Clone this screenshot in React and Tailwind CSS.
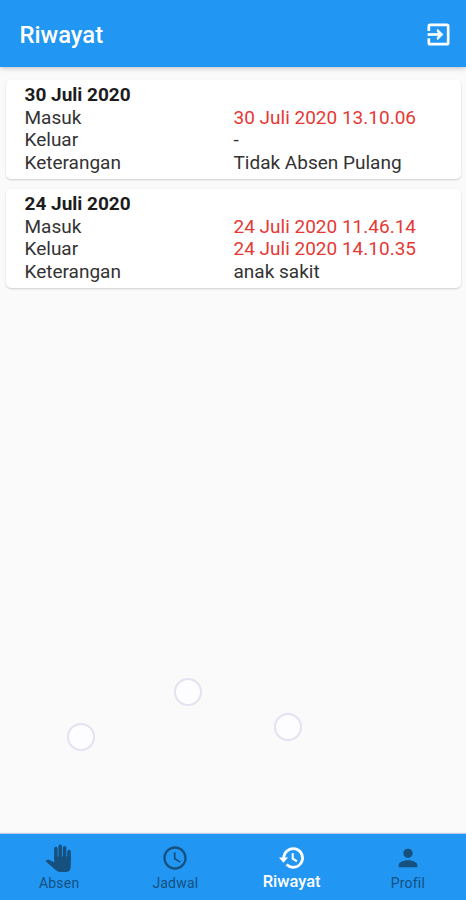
import React from "react";
import { MdAccessTime, MdPerson } from "react-icons/md";

const HandIcon = ({ size }) => (
  <svg width={size} height={size} viewBox="0 0 28 28" fill="none" stroke="currentColor" strokeLinecap="round">
    <path d="M10.9 4.6V14M15.2 2.2V14M19.6 3.7V14M24 7.4V16" strokeWidth="3.5" />
    <path
      d="M9.2 12.5H25.75V22.5Q25.75 28 20.5 28H15.5Q12.3 28 10.4 25.7L0.6 17.2Q2.2 15 5.4 16.4L9.2 18.2Z"
      fill="currentColor"
      stroke="none"
    />
  </svg>
);

const ExitIcon = ({ size }) => (
  <svg width={size} height={size} viewBox="0 0 24 24" fill="none" stroke="currentColor">
    <path d="M4 9V5Q4 4 5 4H19Q20 4 20 5V19Q20 20 19 20H5Q4 20 4 19V15" strokeWidth="2.2" />
    <path d="M3 12H13" strokeWidth="2.2" />
    <path d="M11.2 7.6L15.6 12L11.2 16.4L11 14.5L13 12L11 9.5Z" fill="currentColor" strokeWidth="0.8" />
  </svg>
);

const HistoryIcon = ({ size }) => (
  <svg width={size} height={size} viewBox="0 0 24 24" fill="none" stroke="currentColor">
    <path d="M5 12A8 8 0 1 1 7.35 17.65" strokeWidth="2.4" />
    <path d="M0.8 11.6H8.6L4.7 16Z" fill="currentColor" stroke="none" />
    <path d="M12.6 8V12.6L16.2 14.8" strokeWidth="1.8" />
  </svg>
);

const riwayat = [
  {
    tanggal: "30 Juli 2020",
    masuk: "30 Juli 2020 13.10.06",
    keluar: "-",
    keterangan: "Tidak Absen Pulang",
  },
  {
    tanggal: "24 Juli 2020",
    masuk: "24 Juli 2020 11.46.14",
    keluar: "24 Juli 2020 14.10.35",
    keterangan: "anak sakit",
  },
];

const menus = [
  { label: "Absen", icon: HandIcon },
  { label: "Jadwal", icon: MdAccessTime },
  { label: "Riwayat", icon: HistoryIcon, active: true },
  { label: "Profil", icon: MdPerson },
];

const Row = ({ label, value, red }) => (
  <div className="flex">
    <span className="w-[209px]">{label}</span>
    <span className={red ? "text-[#e53935]" : ""}>{value}</span>
  </div>
);

const RiwayatCard = ({ item }) => (
  <div className="h-[99px] rounded-[5px] bg-white pl-[18.5px] pt-[4px] text-[19px] leading-[22.5px] text-[#333333] shadow-[0_1px_2px_rgba(0,0,0,0.18)]">
    <p className="font-bold text-[#1c1c1c]">{item.tanggal}</p>
    <Row label="Masuk" value={item.masuk} red />
    <Row label="Keluar" value={item.keluar} red={item.keluar !== "-"} />
    <Row label="Keterangan" value={item.keterangan} />
  </div>
);

const App = () => {
  return (
    <div className="relative flex h-[900px] w-[466px] flex-col overflow-hidden bg-[#fafafa] font-['Roboto',sans-serif]">
      <header className="flex h-[67px] shrink-0 items-center justify-between bg-[#2196f3] pl-[19.5px] pr-[13.5px] pt-px text-white shadow-[0_1px_5px_rgba(0,0,0,0.25)]">
        <h1 className="pt-px text-[23.8px] font-medium leading-7">Riwayat</h1>
        <ExitIcon size={29} />
      </header>

      <main className="flex flex-1 flex-col gap-[10px] pl-[6px] pr-[5px] pt-[13px]">
        {riwayat.map((item) => (
          <RiwayatCard key={item.tanggal} item={item} />
        ))}
      </main>

      {/* Floating bubbles over the empty area */}
      <div className="absolute left-[174px] top-[678px] h-7 w-7 rounded-full border-2 border-[#e4e2f0] bg-[#fdfdff]" />
      <div className="absolute left-[67px] top-[723px] h-7 w-7 rounded-full border-2 border-[#e4e2f0] bg-[#fdfdff]" />
      <div className="absolute left-[274px] top-[713px] h-7 w-7 rounded-full border-2 border-[#e4e2f0] bg-[#fdfdff]" />

      <nav className="grid h-[66px] shrink-0 grid-cols-4 bg-[#2196f3] pl-px shadow-[0_-1px_1px_rgba(33,100,200,0.3)]">
        {menus.map(({ label, icon: Icon, active }) => (
          <div
            key={label}
            className={
              active
                ? "flex flex-col items-center pt-[10px] text-white"
                : "flex flex-col items-center pt-[10px] text-[#15507f]"
            }
          >
            <Icon size={28} />
            <span
              className={
                active ? "text-[16.5px] font-medium leading-5" : "mt-px text-[14px] leading-5 tracking-[0.2px]"
              }
            >
              {label}
            </span>
          </div>
        ))}
      </nav>
    </div>
  );
};

export default App;
